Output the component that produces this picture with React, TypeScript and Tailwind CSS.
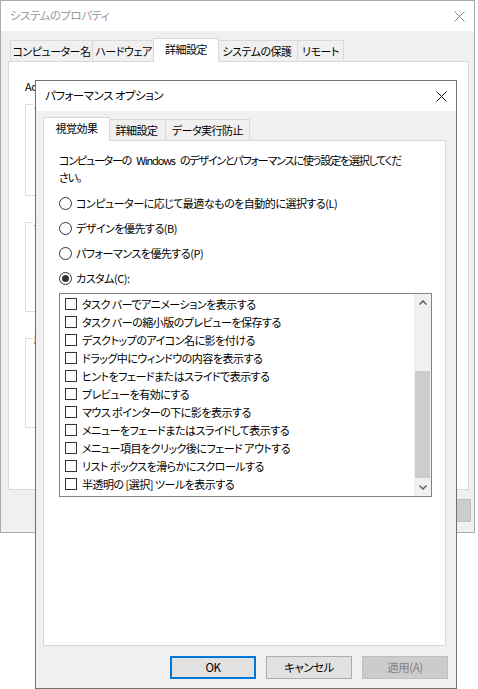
const font = "font-['Noto_Sans_CJK_JP',sans-serif] [font-feature-settings:'palt'] tracking-[-0.5px]";

type Tab = { label: string; w: string; active?: boolean };

function TabRow({ tabs }: { tabs: Tab[] }) {
  return (
    <div className="flex items-end h-[23px]">
      {tabs.map((t) =>
        t.active ? (
          <div
            key={t.label}
            className={`${t.w} -mx-[2px] relative z-10 h-[24px] -mb-px bg-white border border-b-0 border-[#d9d9d9] flex items-center justify-center text-[11px] text-black pb-[2px] whitespace-nowrap`}
          >
            {t.label}
          </div>
        ) : (
          <div
            key={t.label}
            className={`${t.w} h-[21px] bg-[#f0f0f0] border border-b-0 border-[#d9d9d9] -ml-px first:ml-0 flex items-center justify-center text-[11px] text-black whitespace-nowrap`}
          >
            {t.label}
          </div>
        ),
      )}
    </div>
  );
}

function CloseX({ color }: { color: string }) {
  return (
    <svg width="11" height="11" viewBox="0 0 11 11" aria-hidden="true">
      <path d="M0.5 0.5L10.5 10.5M10.5 0.5L0.5 10.5" stroke={color} strokeWidth="1" />
    </svg>
  );
}

function Radio({ label, checked }: { label: string; checked?: boolean }) {
  return (
    <div className="h-[25px] flex items-center gap-[4px]">
      <span className="w-[13px] h-[13px] rounded-full border border-[#333] bg-white flex items-center justify-center">
        {checked && <span className="w-[7px] h-[7px] rounded-full bg-[#333]" />}
      </span>
      <span className="text-[11px] text-black">{label}</span>
    </div>
  );
}

const effects = [
  'タスク バーでアニメーションを表示する',
  'タスク バーの縮小版のプレビューを保存する',
  'デスクトップのアイコン名に影を付ける',
  'ドラッグ中にウィンドウの内容を表示する',
  'ヒントをフェードまたはスライドで表示する',
  'プレビューを有効にする',
  'マウス ポインターの下に影を表示する',
  'メニューをフェードまたはスライドして表示する',
  'メニュー項目をクリック後にフェード アウトする',
  'リスト ボックスを滑らかにスクロールする',
  '半透明の [選択] ツールを表示する',
];

function GroupBox({ label, h }: { label: string; h: string }) {
  return (
    <div className={`relative ${h} w-[420px] border border-[#dcdcdc]`}>
      <span className="absolute -top-[9px] left-[7px] bg-white px-[1px] text-[11px] text-black">{label}</span>
    </div>
  );
}

function Button({ label, primary, disabled }: { label: string; primary?: boolean; disabled?: boolean }) {
  const cls = primary
    ? 'border-2 border-[#0078d7] bg-[#e1e1e1] text-black'
    : disabled
      ? 'border border-[#bfbfbf] bg-[#cccccc] text-[#838383]'
      : 'border border-[#adadad] bg-[#e1e1e1] text-black';
  return (
    <div className={`w-[86px] h-[23px] flex items-center justify-center text-[11.5px] ${cls}`}>{label}</div>
  );
}

export default function App() {
  return (
    <div className={`relative w-[478px] h-[689px] bg-white overflow-hidden ${font}`}>
      {/* background window */}
      <div className="w-[475px] h-[533px] border border-[#aaaaaa] bg-[#f0f0f0] flex flex-col">
        <div className="h-[30px] bg-white flex items-center justify-between pl-[9px] pr-[9px]">
          <span className="text-[11.5px] text-[#999999]">システムのプロパティ</span>
          <CloseX color="#8a8a8a" />
        </div>
        <div className="pt-[7px] pl-[9px]">
          <TabRow
            tabs={[
              { label: 'コンピューター名', w: 'w-[83px]' },
              { label: 'ハードウェア', w: 'w-[63px]' },
              { label: '詳細設定', w: 'w-[66px]', active: true },
              { label: 'システムの保護', w: 'w-[82px]' },
              { label: 'リモート', w: 'w-[47px]' },
            ]}
          />
        </div>
        <div className="ml-[7px] w-[461px] h-[429px] bg-white border border-[#d9d9d9] pl-[16px] pt-[17px] flex flex-col overflow-hidden">
          <span className="text-[11px] text-black leading-[14px] whitespace-nowrap">
            Administrator としてサインインしていない場合は、変更できません。
          </span>
          <div className="mt-[11px] flex flex-col gap-[26px]">
            <GroupBox label="パフォーマンス" h="h-[92px]" />
            <GroupBox label="ユーザー プロファイル" h="h-[90px]" />
            <GroupBox label="起動と回復" h="h-[90px]" />
          </div>
        </div>
        <div className="flex justify-end gap-[10px] pr-[3px] pt-[9px]">
          <Button label="OK" />
          <Button label="キャンセル" />
          <Button label="適用(A)" disabled />
        </div>
      </div>

      {/* performance options dialog */}
      <div className="absolute left-[35px] top-[80px] w-[422px] h-[609px] border border-[#6f6f6f] bg-[#f0f0f0] flex flex-col">
        <div className="h-[30px] shrink-0 bg-white flex items-center justify-between pl-[9px] pr-[9px]">
          <span className="text-[11.5px] text-black">パフォーマンス オプション</span>
          <CloseX color="#111111" />
        </div>
        <div className="pt-[6px] pl-[9px]">
          <TabRow
            tabs={[
              { label: '視覚効果', w: 'w-[67px]', active: true },
              { label: '詳細設定', w: 'w-[59px]' },
              { label: 'データ実行防止', w: 'w-[85px]' },
            ]}
          />
        </div>
        <div className="ml-[7px] w-[403px] h-[506px] shrink-0 bg-white border border-[#d9d9d9] pl-[15px] pt-[11px] flex flex-col">
          <p className="text-[11px] leading-[17px] tracking-[-1.2px] [word-spacing:4px] text-black whitespace-nowrap">
            コンピューターの Windows のデザインとパフォーマンスに使う設定を選択してくだ
            <br />
            さい。
          </p>
          <div className="mt-[5px] flex flex-col">
            <Radio label="コンピューターに応じて最適なものを自動的に選択する(L)" />
            <Radio label="デザインを優先する(B)" />
            <Radio label="パフォーマンスを優先する(P)" />
            <Radio label="カスタム(C):" checked />
          </div>
          <div className="mt-[2px] w-[373px] h-[204px] border border-[#828282] flex">
            <div className="flex-1 flex flex-col pt-[1px] pl-[5px]">
              {effects.map((e) => (
                <div key={e} className="h-[18px] flex items-center gap-[5px]">
                  <span className="w-[12px] h-[12px] border border-[#333] bg-white shrink-0" />
                  <span className="text-[11px] text-black whitespace-nowrap">{e}</span>
                </div>
              ))}
            </div>
            <div className="w-[17px] bg-[#f0f0f0] flex flex-col">
              <div className="h-[17px] flex items-center justify-center">
                <svg width="8" height="5" viewBox="0 0 8 5" aria-hidden="true">
                  <path d="M0.5 4.5L4 1L7.5 4.5" stroke="#606060" strokeWidth="1.5" fill="none" />
                </svg>
              </div>
              <div className="h-[60px]" />
              <div className="h-[107px] mx-[1px] bg-[#cdcdcd]" />
              <div className="flex-1 flex items-center justify-center">
                <svg width="8" height="5" viewBox="0 0 8 5" aria-hidden="true">
                  <path d="M0.5 0.5L4 4L7.5 0.5" stroke="#606060" strokeWidth="1.5" fill="none" />
                </svg>
              </div>
            </div>
          </div>
        </div>
        <div className="flex justify-end gap-[10px] pr-[8px] pt-[10px]">
          <Button label="OK" primary />
          <Button label="キャンセル" />
          <Button label="適用(A)" disabled />
        </div>
      </div>
    </div>
  );
}
